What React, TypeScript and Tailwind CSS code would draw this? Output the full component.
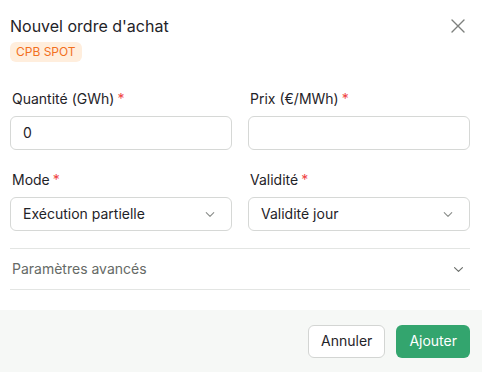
import React from 'react';

const Star = () => <span className="ml-[3px] text-[#ef4444]">*</span>;

const Chevron = ({ className }: { className?: string }) => (
  <svg viewBox="0 0 12 8" className={className} fill="none" stroke="currentColor" strokeWidth={1.3} strokeLinecap="round" strokeLinejoin="round">
    <path d="M1.5 1.75 6 6.25l4.5-4.5" />
  </svg>
);

const Field = ({ label, children }: { label: string; children: React.ReactNode }) => (
  <div className="flex flex-col">
    <label className="ml-[2px] h-5 text-sm leading-5 text-[#1f2328]">
      {label}
      <Star />
    </label>
    <div className="mt-[7px]">{children}</div>
  </div>
);

const SelectBox = ({ value }: { value: string }) => (
  <div className="flex h-[34px] items-center justify-between rounded-md border border-[#d6d8d6] pl-3 pr-4 text-sm text-[#1f2328]">
    <span>{value}</span>
    <Chevron className="h-[7px] w-[10px] text-[#8a8d8a]" />
  </div>
);

export default function App() {
  return (
    <div className="flex h-[372px] w-[482px] flex-col bg-white font-['Inter',sans-serif]">
      <div className="pl-[10px] pr-3 pt-[14px]">
        <div className="flex items-start justify-between">
          <div>
            <h1 className="text-base leading-6 text-[#1f2328]">Nouvel ordre d'achat</h1>
            <span className="mt-[4px] inline-flex h-5 items-center rounded-md bg-[#ffeedd] px-[6px] text-xs text-[#f2701d]">
              CPB SPOT
            </span>
          </div>
          <button className="mr-[4px] mt-[4px] text-[#7d807d]">
            <svg viewBox="0 0 16 16" className="h-[16px] w-[16px]" fill="none" stroke="currentColor" strokeWidth={1.4} strokeLinecap="round">
              <path d="M2 2l12 12M14 2 2 14" />
            </svg>
          </button>
        </div>

        <div className="mt-[27px] grid grid-cols-2 gap-x-4 gap-y-5">
          <Field label="Quantité (GWh)">
            <div className="flex h-[34px] items-center rounded-md border border-[#d6d8d6] px-3 text-sm text-[#1f2328]">0</div>
          </Field>
          <Field label="Prix (€/MWh)">
            <div className="h-[34px] rounded-md border border-[#d6d8d6]" />
          </Field>
          <Field label="Mode">
            <SelectBox value="Exécution partielle" />
          </Field>
          <Field label="Validité">
            <SelectBox value="Validité jour" />
          </Field>
        </div>

        <div className="mt-[17px] flex h-[42px] items-center justify-between border-y border-[#e3e5e3] pl-[2px] pr-[6px] text-sm text-[#666a66]">
          <span>Paramètres avancés</span>
          <Chevron className="h-[7px] w-[11px] text-[#6b6e6b]" />
        </div>
      </div>

      <div className="mt-auto flex h-[62px] items-center justify-end gap-[11px] bg-[#f6f8f6] pl-3 pr-3">
        <button className="h-[33px] rounded-md border border-[#d3d5d3] bg-white px-3 text-sm text-[#1f2328]">
          Annuler
        </button>
        <button className="h-[33px] rounded-md bg-[#33a56e] px-[13px] text-sm text-white">
          Ajouter
        </button>
      </div>
    </div>
  );
}
